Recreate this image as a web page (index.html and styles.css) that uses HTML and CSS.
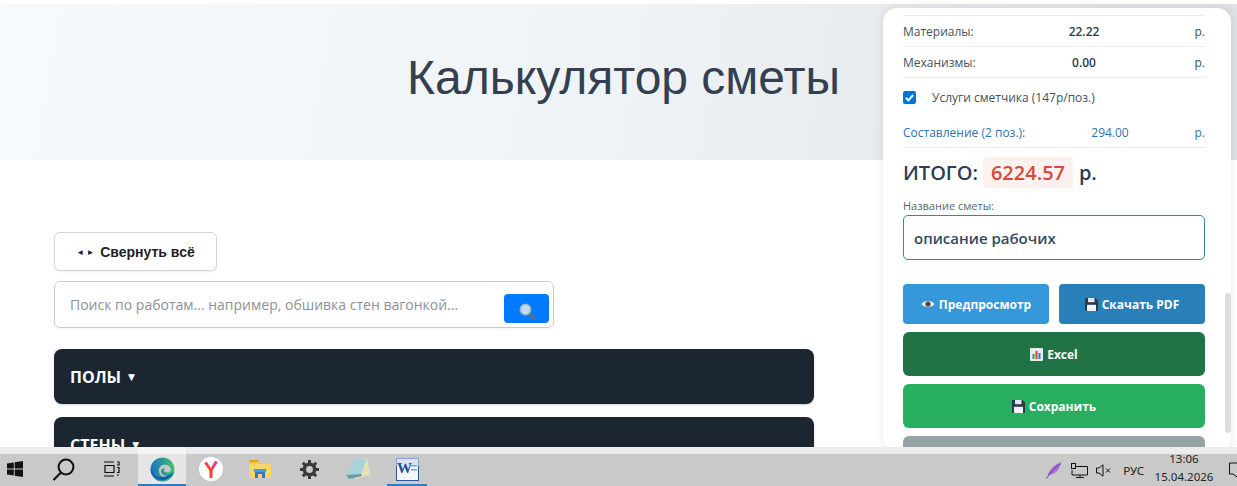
FILE: index.html
```html
<!DOCTYPE html>
<html lang="ru">
<head>
<meta charset="utf-8">
<title>Калькулятор сметы</title>
<link rel="stylesheet" href="styles.css">
</head>
<body>
<div class="viewport">
  <header class="hero"><h1>Калькулятор сметы</h1></header>
  <main class="content">
    <button class="collapse"><span class="arrows">◄ ►</span> Свернуть всё</button>
    <div class="search">
      <span class="placeholder">Поиск по работам... например, обшивка стен вагонкой...</span>
      <span class="search-btn">
        <svg width="16" height="16" viewBox="0 0 16 16"><path d="M10 10l5 5" stroke="#5f6f78" stroke-width="3" stroke-linecap="round"/><circle cx="6.5" cy="6.5" r="5.2" fill="#bcdcf5" stroke="#9fb4c2" stroke-width="1.4"/></svg>
      </span>
    </div>
    <section class="cat"><span>ПОЛЫ</span><i>▼</i></section>
    <section class="cat"><span>СТЕНЫ</span><i>▼</i></section>
  </main>
  <aside class="panel">
    <div class="panel-in">
      <div class="row"><span class="r-l">Материалы:</span><b class="r-v">22.22</b><span class="r-u">р.</span></div>
      <div class="row"><span class="r-l">Механизмы:</span><b class="r-v">0.00</b><span class="r-u">р.</span></div>
      <label class="check"><span class="box"><svg width="13" height="13" viewBox="0 0 13 13"><path d="M2.8 6.8l2.6 2.6 4.8-5.4" fill="none" stroke="#fff" stroke-width="2"/></svg></span>Услуги сметчика (147р/поз.)</label>
      <div class="row blue"><span class="r-l">Составление (2 поз.):</span><span class="r-v">294.00</span><span class="r-u">р.</span></div>
      <div class="total">ИТОГО: <span class="sum">6224.57</span> р.</div>
      <div class="lbl">Название сметы:</div>
      <div class="name">описание рабочих</div>
      <div class="btn-pair">
        <div class="btn blue1">
          <svg class="ico" width="14" height="10" viewBox="0 0 14 10"><path d="M0.5 5C3 1 11 1 13.5 5 11 9 3 9 0.5 5z" fill="#f2f2f2"/><circle cx="7" cy="5" r="2.6" fill="#5a4030"/></svg>
          Предпросмотр</div>
        <div class="btn blue2">
          <svg class="ico" width="13" height="13" viewBox="0 0 13 13"><use href="#floppy"/></svg>
          Скачать PDF</div>
      </div>
      <div class="btn dark">
        <svg class="ico" width="13" height="13" viewBox="0 0 13 13"><rect width="13" height="13" rx="1" fill="#e4eef0"/><rect x="2.5" y="6" width="2" height="5" fill="#3f9a4a"/><rect x="5.5" y="3" width="2" height="8" fill="#c8453c"/><rect x="8.5" y="5" width="2" height="6" fill="#3f6fc0"/></svg>
        Excel</div>
      <div class="btn green">
        <svg class="ico" width="13" height="13" viewBox="0 0 13 13"><use href="#floppy"/></svg>
        Сохранить</div>
      <div class="btn gray"></div>
    </div>
    <div class="thumb"></div>
  </aside>
</div>
<div class="strip"></div>
<footer class="taskbar">
  <div class="tb w30"><svg width="16" height="16" viewBox="0 0 16 16"><path d="M0 2.4l6.8-1v6H0zM7.7 1.2L16 0v7.4H7.7zM0 8.4h6.8v6.2L0 13.6zM7.7 8.4H16V16l-8.300-1.200z" fill="#111"/></svg></div>
  <div class="tb w66"><svg width="23" height="23" viewBox="0 0 23 23"><circle cx="14" cy="9" r="7.400" fill="none" stroke="#111" stroke-width="2"/><path d="M9 14.500L1.500 22" stroke="#111" stroke-width="2.200"/></svg></div>
  <div class="tb w30"><svg width="17" height="16" viewBox="0 0 17 16"><path d="M1 1h10M1 15h10M2 4.500h9v7H2zM14 1h2v3h-2M14 6.500h2v5h-2M14 14h2" fill="none" stroke="#111" stroke-width="1.200"/></svg></div>
  <div class="tb active"><svg width="25" height="25" viewBox="0 0 25 25"><defs><linearGradient id="eg" x1="0" y1="0" x2="1" y2="0"><stop offset="0" stop-color="#1b6fc2"/><stop offset="1" stop-color="#3ec46d"/></linearGradient></defs><circle cx="12.500" cy="12.500" r="12" fill="url(#eg)"/><path d="M24 15c-2 5-8 9-13 8C5 22 1 17 .5 12c2 5 6 8 10 8 5 0 9-2 13.500-5z" fill="#0f5fb5"/><path d="M9 13c0-4 4-6 8-5 3 1 4 3 4 5 0 2-3 3-6 2-2-1-1-2 0-3-2-1-4 0-4 2 0 3 3 5 6 5-5 2-8-1-8-6z" fill="#c9c9c9"/></svg></div>
  <div class="tb"><svg width="24" height="24" viewBox="0 0 24 24"><circle cx="12" cy="12" r="12" fill="#fff"/><path d="M6.500 5.500l5.500 8 5.500-9" fill="none" stroke="#f0433a" stroke-width="2.800"/><path d="M12 13v8" stroke="#f0433a" stroke-width="3"/><path d="M14 10l3.500-5.500" stroke="#e83fa0" stroke-width="2.800"/></svg></div>
  <div class="tb"><svg width="22" height="18" viewBox="0 0 22 18"><path d="M0 0h9l2 3h11v15H0z" fill="#f3c74e"/><path d="M0 0h9l1 2H0z" fill="#d9a520"/><path d="M0 4h22v14H0z" fill="#f8d568"/><path d="M6 18v-8h10v8h-3v-4H9v4z" fill="#2f78c4"/><path d="M5 9h12v3H5z" fill="#4a9ae0"/></svg></div>
  <div class="tb"><svg width="19" height="19" viewBox="0 0 19 19"><circle cx="9.500" cy="9.500" r="5.200" fill="none" stroke="#3a3a3a" stroke-width="3.500"/><path d="M9.500 0v4M9.500 15v4M0 9.500h4M15 9.500h4M2.800 2.800l2.800 2.800M13.400 13.400l2.800 2.800M16.200 2.800l-2.800 2.800M5.600 13.400l-2.800 2.800" stroke="#3a3a3a" stroke-width="3"/></svg></div>
  <div class="tb"><svg width="24" height="22" viewBox="0 0 24 22"><path d="M7 3L21 0l3 17-15 4z" fill="#e7e1b8"/><path d="M0 17L8 2l13-1-6 15z" fill="#a9d3da"/><path d="M0 17l15-1 1 2-13 3z" fill="#6a9aa5"/></svg></div>
  <div class="tb word"><svg width="23" height="23" viewBox="0 0 23 23"><rect x=".5" y=".5" width="22" height="22" fill="#f4f6fa" stroke="#2a5699"/><path d="M0 0h23v8H0z" fill="#c9d7ee" opacity=".6"/><rect x="15" y="7" width="6" height="1.500" fill="#7f9fd0"/><rect x="15" y="11" width="6" height="1.500" fill="#7f9fd0"/><text x="1" y="15" class="w-glyph">W</text></svg></div>
  <div class="tray">
    <svg class="t-f" width="16" height="17" viewBox="0 0 16 17"><path d="M15.500 0C9 2 4 7 1.500 13c4 0 9-2 11-6 1-2 2-4 3-7z" fill="#a66fd6"/><path d="M.5 16.500C4 11 9 5 14 2" stroke="#6b3fa0" fill="none"/></svg>
    <svg class="t-n" width="17" height="15" viewBox="0 0 17 15"><path d="M4 3.500h12.500v8.500H1V7" fill="none" stroke="#111"/><rect x=".5" y=".5" width="4" height="5" fill="none" stroke="#111"/><path d="M9 12v2.500M5 14.500h8" stroke="#111"/></svg>
    <svg class="t-v" width="15" height="13" viewBox="0 0 15 13"><path d="M.5 4h2.500L7 .8v11.400L3 9H.5z" fill="none" stroke="#111"/><path d="M10 4.500l4 4M14 4.500l-4 4" stroke="#111"/></svg>
    <span class="lang">РУС</span>
    <span class="clock"><span>13:06</span><span>15.04.2026</span></span>
    <svg class="t-c" width="8" height="16" viewBox="0 0 8 16"><path d="M8 1H.5v11H4l4 3" fill="none" stroke="#111"/></svg>
  </div>
</footer>
<svg class="defs" width="0" height="0"><defs><g id="floppy"><path d="M0 1a1 1 0 0 1 1-1h9.500L13 2.500V12a1 1 0 0 1-1 1H1a1 1 0 0 1-1-1z" fill="#2b3a4a"/><rect x="3" y="0" width="6.500" height="4.200" fill="#dfe8ef"/><rect x="2" y="6.800" width="9" height="6.200" fill="#eef2f5"/></g></defs></svg>
</body>
</html>
```
FILE: styles.css
```css
* { box-sizing: border-box; }
html, body { margin: 0; padding: 0; height: 486px; overflow: hidden; background: #fff; }
body { font-family: "Open Sans", "Noto Sans", sans-serif; color: #2c3e50; }

.viewport { position: relative; height: 447px; padding-top: 4px; overflow: hidden; background: #fff; }

.hero {
  height: 156px;
  background: linear-gradient(100deg, #f7fafc 0%, #eff3f6 50%, #dde1e5 100%);
  display: flex; align-items: center; justify-content: center;
  padding-left: 10px;
}
.hero h1 { margin: 0; font: 400 48px/56px "Liberation Sans", Arial, sans-serif; color: #344050; padding-bottom: 8px; }

.content { width: 814px; padding: 72px 0 0 54px; }

.collapse {
  display: block; width: 163px; height: 39px;
  background: #fff; border: 1px solid #d5d5d5; border-radius: 6px;
  font: 700 14px "Liberation Sans", Arial, sans-serif; color: #222;
  box-shadow: 0 1px 2px rgba(0,0,0,.08); padding: 0;
}
.arrows { font-size: 8px; vertical-align: 2px; margin-right: 2px; }

.search {
  margin-top: 10px; height: 47px; width: 500px;
  border: 1px solid #ccc; border-radius: 6px;
  display: flex; align-items: center; justify-content: space-between;
  padding: 0 4px 0 15px;
  box-shadow: 0 1px 2px rgba(0,0,0,.05);
}
.placeholder { font-size: 14px; color: #8d9299; }
.search-btn {
  width: 45px; height: 29px; margin-top: 7px; background: #007bff; border-radius: 4px;
  display: flex; align-items: center; justify-content: center;
}
.search-btn svg { margin-top: 5px; }

.cat {
  margin-top: 21px; height: 55px; background: #1b2631; border-radius: 8px;
  color: #fff; font-weight: 700; font-size: 16px; padding-left: 16px;
  display: flex; align-items: center; gap: 7px;
  box-shadow: 0 1px 2px rgba(0,0,0,.2);
}
.cat + .cat { margin-top: 13px; }
.cat i { font-style: normal; font-size: 9px; font-family: "DejaVu Sans", sans-serif; }

.panel {
  position: absolute; left: 883px; top: 8px; width: 348px; height: 444px;
  background: #fff; border-radius: 14px; overflow: hidden;
  box-shadow: 0 0 10px rgba(0,0,0,.1);
}
.panel-in { padding: 7px 26px 0 20px; }
.thumb { position: absolute; right: 0; top: 285px; width: 6px; height: 140px; background: #ddd; border-radius: 3px; }

.row {
  display: grid; grid-template-columns: 132px 98px 1fr; align-items: center;
  height: 31px; border-top: 1px solid #e9ecef; font-size: 12px; color: #44505c;
}
.r-v { text-align: center; color: #2c3e50; font-weight: 600; }
.r-u { text-align: right; }
.row + .check { border-top: 1px solid #e9ecef; }

.check { display: flex; align-items: center; height: 40px; font-size: 12px; color: #44505c; }
.box {
  width: 13px; height: 13px; border-radius: 2px; background: #0075d9; margin-right: 16px;
  display: flex;
}
.row.blue { height: 31px; border-top: 0; border-bottom: 1px solid #e9ecef; color: #2e75ad; padding-top: 0; grid-template-columns: 151px 112px 1fr; }
.blue .r-v { color: #2e75ad; font-weight: 400; text-align: center; }
.blue .r-r { text-align: right; }

.total { display: flex; align-items: center; gap: 5px; margin-top: 9px; height: 31px; font-size: 20px; font-weight: 600; }
.sum { background: #fdf1f0; color: #d9483b; border-radius: 4px; padding: 0 8px; height: 31px; line-height: 31px; width: 90px; text-align: center; margin-right: 1px; }

.lbl { margin-top: 10px; font-size: 11px; line-height: 16px; color: #5b6670; }
.name {
  margin-top: 1px; height: 45px; border: 1px solid #3b82b0; border-radius: 5px;
  padding: 0 10px; display: flex; align-items: center;
  font-size: 15px; font-weight: 600; color: #34495e;
}

.btn {
  height: 44px; margin-top: 8px; border-radius: 6px; color: #fff;
  display: flex; align-items: center; justify-content: center; gap: 4px;
  font-size: 12px; font-weight: 700;
}
.btn-pair { display: grid; grid-template-columns: 1fr 1fr; gap: 10px; margin-top: 24px; }
.btn-pair .btn { margin-top: 0; height: 40px; border-radius: 4px; }
.blue1 { background: #3498db; }
.blue2 { background: #2980b9; }
.dark { background: #217346; }
.green { background: #27ae60; }
.gray { background: #95a5a6; }
.ico { flex: none; }

.strip { height: 7px; background: #ececec; }

.taskbar {
  height: 32px; background: #c9c9c9; display: flex; position: relative;
  align-items: stretch;
}
.tb { width: 48px; margin-right: 1px; display: flex; align-items: center; justify-content: center; padding-bottom: 2px; position: relative; }
.tb.w30 { width: 30px; margin-right: 0; }
.tb.w66 { width: 66px; margin-right: 0; }
.tb.w30 + .tb.w66 + .tb.w30 { margin-right: 12px; }
.tb.active { background: #e6e6e6; border-bottom: 2px solid #2d7fc4; padding-bottom: 0; }
.tb.active::before { content: ""; position: absolute; left: 0; right: 0; top: -7px; height: 7px; background: #f5f5f5; }
.tb.word::after { content: ""; position: absolute; left: 4px; right: 4px; bottom: 0; height: 2px; background: #2d7fc4; }
.w-glyph { font: 700 15px "Liberation Serif", serif; fill: #1f4e9c; }

.tray { margin-left: auto; display: flex; align-items: center; color: #222; font-size: 12px; font-family: "Noto Sans", sans-serif; }
.t-f { margin-right: 9px; }
.t-n { margin-right: 8px; }
.t-v { margin-right: 12px; }
.lang { font-size: 11.500px; margin-right: 13px; }
.clock { width: 54px; display: flex; flex-direction: column; align-items: center; font-size: 11.500px; line-height: 18px; margin-right: 18px; margin-top: -5px; white-space: nowrap; }
.t-c { margin-right: 0; }
.defs { position: absolute; }
```
